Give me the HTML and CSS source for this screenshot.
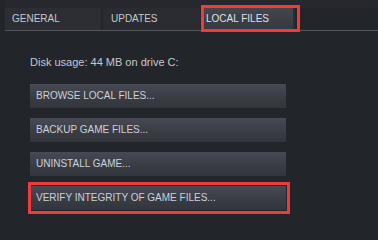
FILE: index.html
```html
<!DOCTYPE html>
<html>
<head>
<meta charset="utf-8">
<link rel="stylesheet" href="styles.css">
</head>
<body>
<div class="page">
  <div class="tabs">
    <div class="tab tab-general">GENERAL</div>
    <div class="tab tab-updates">UPDATES</div>
    <div class="tab tab-local active">LOCAL FILES</div>
  </div>
  <div class="content">
    <div class="disk">Disk usage: 44 MB on drive C:</div>
    <div class="actions">
      <div class="btn">BROWSE LOCAL FILES...</div>
      <div class="btn">BACKUP GAME FILES...</div>
      <div class="btn">UNINSTALL GAME...</div>
      <div class="btn">VERIFY INTEGRITY OF GAME FILES...</div>
    </div>
  </div>
  <div class="mark mark-tab"></div>
  <div class="mark mark-verify"></div>
</div>
</body>
</html>
```
FILE: styles.css
```css
html, body {
  margin: 0;
  padding: 0;
  background: #22252a;
}
.page {
  position: relative;
  width: 378px;
  height: 222px;
  overflow: hidden;
  background: #22252a;
  font-family: "Liberation Sans", Arial, sans-serif;
  color: #c5c9d0;
}
.tabs {
  display: flex;
  margin-left: 5px;
  padding-top: 8px;
  border-bottom: 1px solid #53565c;
  background: linear-gradient(#26282d 0 8px, transparent 8px);
}
.tab {
  height: 22px;
  line-height: 22px;
  font-size: 10px;
  padding-left: 7px;
  box-sizing: border-box;
  background: #2c2e34;
}
.tab-general { width: 96px; }
.tab-updates { width: 97px; margin-left: 2px; padding-left: 8px; background: #2a2c31; }
.tab-local {
  width: 93px;
  margin-left: 2px;
  padding-left: 4px;
  background: linear-gradient(#43464d, #35383e);
  box-shadow: inset -2px 0 0 #2a2c31;
  color: #dfe2e6;
}
.content {
  padding-left: 30px;
}
.disk {
  margin-top: 25px;
  font-size: 11px;
  line-height: 13px;
}
.actions {
  display: flex;
  flex-direction: column;
  gap: 10px;
  margin-top: 15px;
}
.btn {
  width: 256px;
  height: 24px;
  line-height: 24px;
  box-sizing: border-box;
  padding-left: 6px;
  font-size: 10px;
  background: linear-gradient(#474a52, #393c43 60%, #32353b);
  color: #cdd1d8;
}
.mark {
  position: absolute;
  border: 3px solid #f23a3a;
  box-sizing: border-box;
}
.mark-tab {
  left: 201px;
  top: 5px;
  width: 99px;
  height: 27px;
}
.mark-verify {
  left: 28px;
  top: 182px;
  width: 262px;
  height: 32px;
}
```
